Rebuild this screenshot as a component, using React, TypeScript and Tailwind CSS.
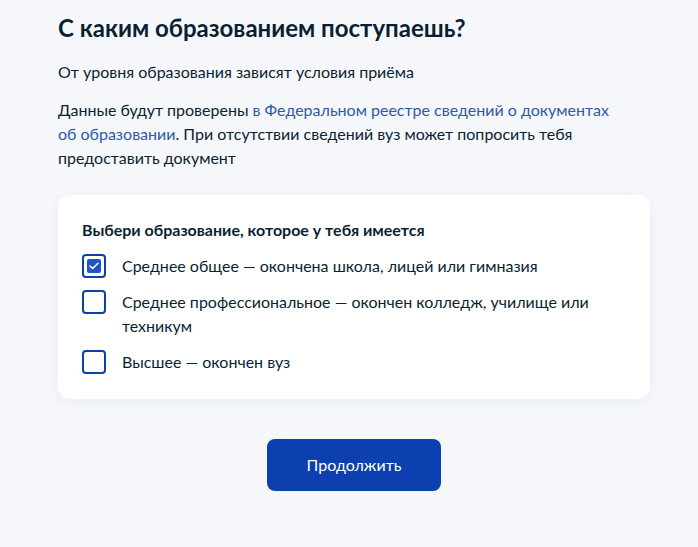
import React from 'react';

const options = [
  { label: 'Среднее общее — окончена школа, лицей или гимназия', checked: true },
  { label: 'Среднее профессиональное — окончен колледж, училище или техникум', checked: false },
  { label: 'Высшее — окончен вуз', checked: false },
];

const Checkbox: React.FC<{ checked: boolean }> = ({ checked }) => (
  <span className="flex h-6 w-6 shrink-0 items-center justify-center rounded-[4px] border-2 border-[#0d3fa8] bg-white">
    {checked && (
      <span className="flex h-[14px] w-[14px] items-center justify-center rounded-[2px] bg-[#1d55c9]">
        <svg width="10" height="8" viewBox="0 0 10 8" fill="none">
          <path d="M1 4l2.6 2.5L9 1.2" stroke="white" strokeWidth="1.5" strokeLinecap="round" strokeLinejoin="round" />
        </svg>
      </span>
    )}
  </span>
);

export default function App() {
  return (
    <div className="min-h-[547px] w-full bg-[#f5f7fb] font-['Lato','Noto_Sans',sans-serif] text-[#0b1f33]">
      <div className="px-[58px] pt-[12px]">
        <h1 className="text-[24px] font-bold leading-[32px]">С каким образованием поступаешь?</h1>
        <p className="mt-[16px] text-[16px] leading-[24px]">От уровня образования зависят условия приёма</p>
        <p className="mt-[14px] w-[560px] text-[16px] leading-[24px]">
          Данные будут проверены{' '}
          <span className="text-[#2f5aa8]">в Федеральном реестре сведений о документах об образовании</span>. При
          отсутствии сведений вуз может попросить тебя предоставить документ
        </p>

        <div className="mt-[25px] w-[592px] rounded-[12px] bg-white px-6 pb-[25px] pt-[23px] shadow-[0_2px_12px_rgba(30,60,120,0.06)]">
          <div className="text-[16px] font-bold leading-[24px]">Выбери образование, которое у тебя имеется</div>
          <div className="mt-[12px] flex flex-col gap-[12px]">
            {options.map((o) => (
              <div key={o.label} className="flex items-start gap-4">
                <Checkbox checked={o.checked} />
                <span className="text-[16px] leading-[24px]">{o.label}</span>
              </div>
            ))}
          </div>
        </div>

        <div className="mt-[40px] flex w-[592px] justify-center">
          <button className="h-[52px] w-[174px] rounded-[8px] bg-[#0c40b0] text-[16px] text-white">Продолжить</button>
        </div>
      </div>
    </div>
  );
}
